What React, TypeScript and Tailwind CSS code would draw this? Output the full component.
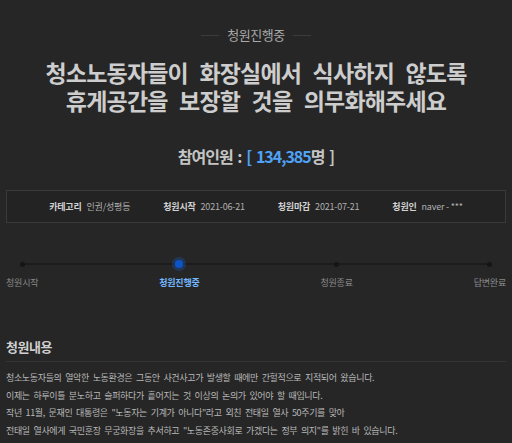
import React from 'react';

const font = { fontFamily: '"Noto Sans CJK KR", "Noto Sans", sans-serif' };

const info = [
  { label: '카테고리', value: '인권/성평등' },
  { label: '청원시작', value: '2021-06-21' },
  { label: '청원마감', value: '2021-07-21' },
  { label: '청원인', value: 'naver - ***' },
];

const steps = [
  { label: '청원시작', active: false },
  { label: '청원진행중', active: true },
  { label: '청원종료', active: false },
  { label: '답변완료', active: false },
];

const body = [
  '청소노동자들의 열악한 노동환경은 그동안 사건사고가 발생할 때에만 간헐적으로 지적되어 왔습니다.',
  '이제는 하루이틀 분노하고 슬퍼하다가 흩어지는 것 이상의 논의가 있어야 할 때입니다.',
  '작년 11월, 문재인 대통령은 "노동자는 기계가 아니다"라고 외친 전태일 열사 50주기를 맞아',
  '전태일 열사에게 국민훈장 무궁화장을 추서하고 "노동존중사회로 가겠다는 정부 의지"를 밝힌 바 있습니다.',
];

export default function App() {
  return (
    <div className="min-h-screen w-full bg-[#262626] px-[6px] overflow-hidden" style={font}>
      {/* status label */}
      <div className="pt-[27px] flex items-center justify-center gap-[8px]">
        <span className="block w-[18px] h-px bg-[#3c3c3c]" />
        <span className="text-[13px] leading-4 tracking-[-0.5px] text-[#a9a9a9]">청원진행중</span>
        <span className="block w-[18px] h-px bg-[#3c3c3c]" />
      </div>

      {/* title */}
      <h1 className="mt-[15px] text-center text-[23px] leading-[28px] font-bold tracking-[-0.8px] [word-spacing:7px] text-[#cdcdcd] whitespace-nowrap">
        청소노동자들이 화장실에서 식사하지 않도록
        <br />
        휴게공간을 보장할 것을 의무화해주세요
      </h1>

      {/* count */}
      <div className="mt-[32px] text-center text-[16px] leading-5 font-bold tracking-[-1px] [word-spacing:2px] text-[#c4c4c4]">
        참여인원 : <span className="text-[#4fa3f7]">[ 134,385</span>명 ]
      </div>

      {/* info box */}
      <div className="mt-[24px] h-[33px] border border-[#3a3a3a] bg-[#232323] flex items-center justify-center gap-[33px] text-[9px] tracking-[-0.2px]">
        {info.map((i) => (
          <div key={i.label} className="flex items-center gap-[5px]">
            <span className="font-bold text-[#d2d2d2]">{i.label}</span>
            <span className="text-[#b0b0b0]">{i.value}</span>
          </div>
        ))}
      </div>

      {/* progress */}
      <div className="relative mt-[35px] flex justify-between">
        <div className="absolute top-[5px] left-[16px] right-[17px] h-[2px] bg-[#1c1c1c]" />
        {steps.map((s) => (
          <div key={s.label} className="relative flex flex-col items-center">
            <div className="h-3 flex items-center justify-center">
              {s.active ? (
                <span className="block w-[8px] h-[8px] rounded-full bg-[#0b55c8] shadow-[0_0_0_3px_rgba(30,90,180,0.35)]" />
              ) : (
                <span className="block w-[5px] h-[5px] rounded-full bg-[#151515]" />
              )}
            </div>
            <span
              className={
                s.active
                  ? 'mt-[7px] text-[9px] leading-3 tracking-[-0.2px] font-bold text-[#72b6ff]'
                  : 'mt-[7px] text-[9px] leading-3 tracking-[-0.2px] text-[#8a8a8a]'
              }
            >
              {s.label}
            </span>
          </div>
        ))}
      </div>

      {/* content */}
      <h2 className="mt-[50px] pb-[6px] border-b border-[#343434] text-[13px] leading-4 font-bold tracking-[-0.5px] text-[#d0d0d0]">
        청원내용
      </h2>
      <div className="mt-[7px] text-[9px] leading-[17.6px] tracking-[-0.35px] [word-spacing:2px] text-[#b8b8b8]">
        {body.map((line) => (
          <p key={line} className="whitespace-nowrap">{line}</p>
        ))}
      </div>
    </div>
  );
}
